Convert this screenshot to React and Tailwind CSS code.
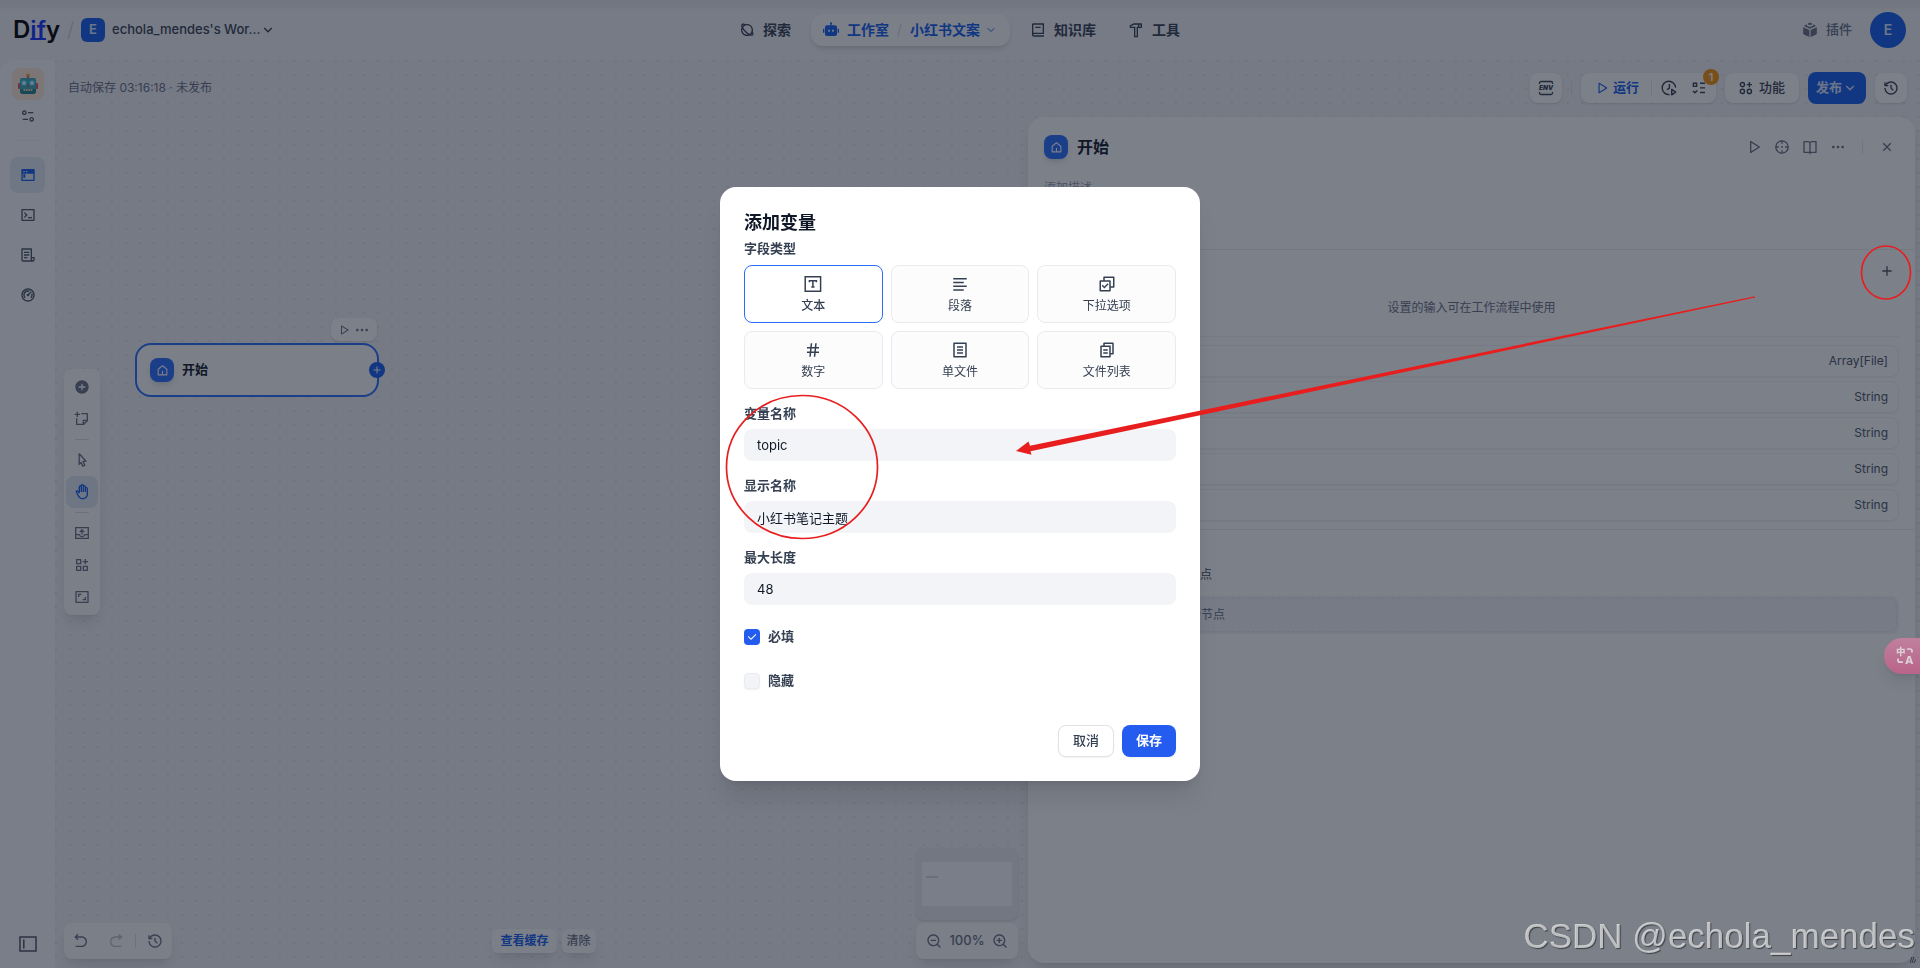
import React from 'react';
import {
  RiAddCircleFill,
  RiAddLine,
  RiAlignLeft,
  RiArrowDownSLine,
  RiArrowGoBackLine,
  RiArrowGoForwardFill,
  RiAspectRatioLine,
  RiBook2Line,
  RiBookOpenLine,
  RiCheckLine,
  RiCheckboxMultipleLine,
  RiCloseLine,
  RiDashboard2Line,
  RiEqualizer2Line,
  RiFileCopy2Line,
  RiFileList3Line,
  RiFileListLine,
  RiFunctionAddLine,
  RiHammerLine,
  RiHand,
  RiHashtag,
  RiHistoryLine,
  RiHome5Line,
  RiMoreFill,
  RiPlanetLine,
  RiPlayLargeLine,
  RiRobot2Fill,
  RiStickyNoteAddLine,
  RiTerminalBoxLine,
  RiTerminalWindowFill,
  RiZoomInLine,
  RiZoomOutLine,
} from 'react-icons/ri';

const EnvIcon = () => (
  <svg viewBox="0 0 16 16" className="size-4" fill="none" stroke="currentColor" strokeWidth="1.3">
    <path d="M1.5 4V3a1.5 1.5 0 0 1 1.5-1.5h10A1.5 1.5 0 0 1 14.5 3v1M1.5 12v1A1.5 1.5 0 0 0 3 14.5h10a1.5 1.5 0 0 0 1.5-1.5v-1" />
    <text x="8" y="10.3" textAnchor="middle" fontSize="6.4" fontWeight="900" fontStyle="italic" fill="currentColor" stroke="none">
      ENV
    </text>
  </svg>
);

const ClockPlayIcon = () => (
  <svg viewBox="0 0 16 16" className="size-4" fill="none" stroke="currentColor" strokeWidth="1.4">
    <path d="M14.6 7.6A6.7 6.7 0 1 0 8.6 14.6" />
    <path d="M8.4 4v4.2L6 9.6" />
    <path d="M10.7 9.4l4 2.7-4 2.7z" strokeLinejoin="round" />
  </svg>
);

const ChecklistIcon = () => (
  <svg viewBox="0 0 14 14" className="size-3.5" fill="none" stroke="currentColor" strokeWidth="1.4">
    <path d="M1.4 2.2h3.2v3.2H1.4zM8 2.3h5M8 6.9h5M8 11.5h5M1 10l1.9 1.8L5.3 9.4" />
  </svg>
);

const FeaturesIcon = () => (
  <svg viewBox="0 0 14 14" className="size-3.5" fill="none" stroke="currentColor" strokeWidth="1.4">
    <circle cx="3.4" cy="3.6" r="2.1" />
    <circle cx="3.4" cy="10.4" r="2.1" />
    <circle cx="10.4" cy="10.4" r="2.1" />
    <path d="M10.4 1v5.2M7.8 3.6H13" />
  </svg>
);

const PluginIcon = () => (
  <svg viewBox="0 0 16 16" className="size-4" fill="currentColor">
    <path d="M1.2 5.2l6.2 2.9v7L1.8 12.4a1 1 0 0 1-.6-.9zM14.8 5.2L8.6 8.1v7l5.6-2.7a1 1 0 0 0 .6-.9z" />
    <path d="M4.9 2.3L1.9 3.9 8 6.8l6.1-2.9-3-1.6v1.4L8 5 4.9 3.7z" />
    <ellipse cx="8" cy="1.9" rx="2.1" ry="1.1" />
  </svg>
);

const TargetIcon = () => (
  <svg viewBox="0 0 16 16" className="size-4" fill="none" stroke="currentColor" strokeWidth="1.3">
    <circle cx="8" cy="8" r="6.2" />
    <path d="M8 1.8v3M8 11.2v3M1.8 8h3M11.2 8h3" />
    <circle cx="8" cy="8" r="0.9" fill="currentColor" stroke="none" />
  </svg>
);

const PointerIcon = () => (
  <svg viewBox="0 0 16 16" className="size-4" fill="none" stroke="currentColor" strokeWidth="1.3" strokeLinejoin="round">
    <path d="M5.2 1.8l6.8 7.4-3 .4 1.8 3.6-2 1-1.8-3.7-1.8 1.9z" />
  </svg>
);

const ExportIcon = () => (
  <svg viewBox="0 0 16 16" className="size-4" fill="none" stroke="currentColor" strokeWidth="1.3">
    <path d="M1.7 2.6h12.6v10.8H1.7zM1.7 9.6h3.6c.4 1.3 1.4 2 2.7 2s2.3-.7 2.7-2h3.6M8 9.6V5M5.8 7L8 4.8 10.2 7" />
  </svg>
);

const SidebarIcon = () => (
  <svg viewBox="0 0 18 16" className="h-4 w-[18px]" fill="none" stroke="currentColor" strokeWidth="1.5">
    <path d="M1 1h16v14H1zM4.8 3.5v9" />
  </svg>
);

const TextFieldIcon = () => (
  <svg viewBox="0 0 18 18" className="size-[18px]" fill="none" stroke="currentColor" strokeWidth="1.5">
    <path d="M1.2 1.8h15.4v14.4H1.2zM5.4 7.2V5.7h7v1.5M8.9 5.7v6.2M7.3 11.9h3.2" />
  </svg>
);

const TranslateIcon = () => (
  <svg viewBox="0 0 18 18" className="size-[18px] overflow-visible" fill="currentColor">
    <text x="0" y="8.4" fontSize="9.5" fontWeight="900">中</text>
    <text x="9" y="16.6" fontSize="11" fontWeight="800">A</text>
    <path d="M11 2h3a2 2 0 0 1 2 2v1.6M2 11.6v1.6a2 2 0 0 0 2 2h3" fill="none" stroke="currentColor" strokeWidth="1.7" />
  </svg>
);

const HomeBadge = () => (
  <span className="flex size-6 shrink-0 items-center justify-center rounded-lg bg-[#296dff] text-white shadow-md">
    <RiHome5Line className="size-[13px]" />
  </span>
);

const RobotFace = () => (
  <svg viewBox="0 0 22 22" className="size-[22px]">
    <circle cx="11" cy="2.4" r="2" fill="#f0a53a" />
    <rect x="10" y="3.4" width="2" height="3" fill="#8d6bb0" />
    <rect x="1" y="10" width="3" height="6" rx="1" fill="#d8576a" />
    <rect x="18" y="10" width="3" height="6" rx="1" fill="#d8576a" />
    <path d="M5 5h12a2 2 0 0 1 2 2v11a3 3 0 0 1-3 3H6a3 3 0 0 1-3-3V7a2 2 0 0 1 2-2z" fill="#3fa9b5" />
    <path d="M3 16h16v2a3 3 0 0 1-3 3H6a3 3 0 0 1-3-3z" fill="#22808f" />
    <circle cx="7" cy="10" r="2.6" fill="#e3fbff" stroke="#2cc3e8" strokeWidth="1.2" />
    <circle cx="15" cy="10" r="2.6" fill="#e3fbff" stroke="#2cc3e8" strokeWidth="1.2" />
    <path d="M11 11l1.5 2.6h-3z" fill="#d8474f" />
    <path d="M6.5 17h9" stroke="#f3d9b8" strokeWidth="2" strokeDasharray="1.6 0.8" />
  </svg>
);

const sideNav = [
  { label: '编排', Icon: RiTerminalWindowFill, active: true },
  { label: '访问 API', Icon: RiTerminalBoxLine },
  { label: '日志', Icon: RiFileList3Line },
  { label: '监测', Icon: RiDashboard2Line },
];

const outputTypes = ['Array[File]', 'String', 'String', 'String', 'String'];

const fieldTypes = [
  { label: '文本', Icon: TextFieldIcon, active: true },
  { label: '段落', Icon: RiAlignLeft },
  { label: '下拉选项', Icon: RiCheckboxMultipleLine },
  { label: '数字', Icon: RiHashtag },
  { label: '单文件', Icon: RiFileListLine },
  { label: '文件列表', Icon: RiFileCopy2Line },
];

const textFields = [
  { id: 'variable', label: '变量名称', value: 'topic' },
  { id: 'label', label: '显示名称', value: '小红书笔记主题' },
  { id: 'max-length', label: '最大长度', value: '48' },
];

const Header = () => (
  <header className="flex h-[60px] shrink-0 items-center bg-linear-to-b from-[#e6e8eb] from-5% to-[#f2f4f7] to-20% text-[#354052]">
    <div className="flex flex-1 items-center pl-[13px]">
      <a href="#" className="text-2xl leading-7 font-semibold text-black">
        D<span className="text-[#1433ff] underline decoration-2 underline-offset-0">if</span>y
      </a>
      <span className="mx-[7px] text-xl font-light text-[#cbd0d9]">/</span>
      <button className="flex items-center text-[13px] font-medium">
        <span className="mr-[7px] flex size-6 items-center justify-center rounded-md bg-[#155eef] font-semibold text-[#dbe6ff]">E</span>
        echola_mendes's Wor...
        <RiArrowDownSLine className="size-4" />
      </button>
    </div>

    <nav className="flex items-center gap-2 text-sm font-semibold">
      <a href="#" className="flex h-8 items-center gap-2 px-3">
        <RiPlanetLine className="size-4" />探索
      </a>
      <div className="flex h-8 items-center rounded-xl bg-[#fcfcfd] px-3 text-[#155eef] shadow-md">
        <a href="#" className="flex items-center gap-2">
          <RiRobot2Fill className="size-4" />工作室
        </a>
        <span className="mx-2 font-light text-[#cbd0d9]">/</span>
        <button className="flex items-center gap-1">
          小红书文案
          <RiArrowDownSLine className="size-3.5 opacity-60" />
        </button>
      </div>
      <a href="#" className="flex h-8 items-center gap-2 px-3">
        <RiBook2Line className="size-4" />知识库
      </a>
      <a href="#" className="flex h-8 items-center gap-2 px-3">
        <RiHammerLine className="size-4" />工具
      </a>
    </nav>

    <div className="flex flex-1 items-center justify-end gap-[18px] pr-[14px]">
      <a href="#" className="flex items-center gap-2 text-[13px] font-medium text-[#676f83]">
        <PluginIcon />插件
      </a>
      <button className="flex size-9 items-center justify-center rounded-full bg-[#155eef] text-sm font-semibold text-[#dbe6ff]">E</button>
    </div>
  </header>
);

const Sidebar = () => (
  <aside className="flex w-[55px] shrink-0 flex-col items-center rounded-tl-2xl bg-[#fafbfc] pt-2 pb-4 text-[#495464]">
    <span className="flex size-8 items-center justify-center rounded-lg bg-[#ffead5]">
      <RobotFace />
    </span>
    <button aria-label="应用设置" className="mt-2">
      <RiEqualizer2Line className="size-4" />
    </button>
    <hr className="mt-4 w-6 border-[#f0f2f4]" />
    <nav className="mt-4 flex flex-1 flex-col gap-1">
      {sideNav.map(({ label, Icon, active }) => (
        <a
          key={label}
          href="#"
          aria-label={label}
          className={`flex h-9 w-[35px] items-center justify-center rounded-lg ${active ? 'bg-[#e3ecf5] text-[#155eef]' : ''}`}
        >
          <Icon className="size-4" />
        </a>
      ))}
    </nav>
    <button aria-label="展开侧栏">
      <SidebarIcon />
    </button>
  </aside>
);

const Toolbar = () => (
  <div className="flex h-[57px] shrink-0 items-center justify-between pr-[13px] pb-px pl-[13px] text-[13px] font-medium text-[#354052]">
    <p className="text-xs font-normal text-[#676f83]">自动保存 03:16:18 · 未发布</p>
    <div className="flex items-center gap-[9px]">
      <button aria-label="环境变量" className="flex h-[30px] w-8 items-center justify-center rounded-lg bg-white shadow-sm">
        <EnvIcon />
      </button>
      <span className="h-3.5 w-px bg-[#dcdfe6]" />
      <div className="relative flex h-[30px] w-[135px] items-center rounded-lg bg-white pl-[14px] shadow-sm">
        <button className="flex items-center gap-1 font-semibold text-[#155eef]">
          <RiPlayLargeLine className="size-3.5" />运行
        </button>
        <span className="mr-[9px] ml-3 h-3.5 w-px bg-[#e4e7ec]" />
        <button aria-label="运行历史">
          <ClockPlayIcon />
        </button>
        <button aria-label="检查清单" className="ml-[15px]">
          <ChecklistIcon />
        </button>
        <span className="absolute -top-1 -right-[3px] flex size-4 items-center justify-center rounded-full bg-[#f79009] text-[11px] font-semibold text-white">1</span>
      </div>
      <button className="flex h-[30px] w-[74px] items-center justify-center gap-1.5 rounded-lg bg-white shadow-sm">
        <FeaturesIcon />功能
      </button>
      <button className="flex h-8 w-[58px] items-center justify-center rounded-lg bg-[#155eef] font-semibold text-[#dbe6ff]">
        发布<RiArrowDownSLine className="size-4" />
      </button>
      <button aria-label="版本历史" className="flex h-[30px] w-8 items-center justify-center rounded-lg bg-white shadow-sm">
        <RiHistoryLine className="size-4" />
      </button>
    </div>
  </div>
);

const ToolButton = ({ label, active, children }) => (
  <button
    aria-label={label}
    className={`flex size-8 items-center justify-center rounded-lg ${active ? 'bg-[#dfe8f2] text-[#155eef]' : ''}`}
  >
    {children}
  </button>
);

const StartNode = () => (
  <div className="absolute top-[226px] left-20 flex h-[54px] w-[244px] items-center gap-2 rounded-2xl border-2 border-[#296dff] bg-[#fcfcfd] px-[13px]">
    <HomeBadge />
    <span className="text-[13px] font-semibold text-[#101828]">开始</span>
    <div className="absolute right-0 bottom-[54px] flex h-[23px] w-[46px] items-center justify-between rounded-lg bg-white px-[7px] text-[#676f83] shadow-sm">
      <RiPlayLargeLine className="size-3" />
      <RiMoreFill className="size-4" />
    </div>
    <button aria-label="添加节点" className="absolute top-[17px] -right-[8px] flex size-4 items-center justify-center rounded-full bg-[#155eef] text-white">
      <RiAddLine className="size-3" />
    </button>
  </div>
);

const CanvasControls = () => (
  <div className="flex min-w-0 flex-1 flex-col justify-between pt-[252px] pr-[10px] pb-[9px] pl-[9px] text-[#676f83]">
    <div className="flex w-9 flex-col items-center rounded-lg bg-[#fcfcfd] py-0.5 shadow-lg">
      <ToolButton label="添加节点"><RiAddCircleFill className="size-4" /></ToolButton>
      <ToolButton label="添加注释"><RiStickyNoteAddLine className="size-4" /></ToolButton>
      <hr className="my-1 w-3.5 border-[#d9dde5]" />
      <ToolButton label="指针模式"><PointerIcon /></ToolButton>
      <ToolButton label="手模式" active><RiHand className="size-4" /></ToolButton>
      <hr className="my-1 w-3.5 border-[#d9dde5]" />
      <ToolButton label="导出图片"><ExportIcon /></ToolButton>
      <ToolButton label="整理节点"><RiFunctionAddLine className="size-4" /></ToolButton>
      <ToolButton label="最大化画布"><RiAspectRatioLine className="size-4" /></ToolButton>
    </div>

    <div className="flex items-end justify-between">
      <div className="flex h-9 w-[108px] items-center justify-between rounded-lg bg-[#fcfcfd] px-[9px] shadow-lg">
        <button aria-label="撤销"><RiArrowGoBackLine className="size-4" /></button>
        <button aria-label="重做" className="ml-2 opacity-40"><RiArrowGoForwardFill className="size-4" /></button>
        <span className="h-3.5 w-px bg-[#dcdfe6]" />
        <button aria-label="变更历史"><RiHistoryLine className="size-4" /></button>
      </div>
      <div className="mb-1.5 flex gap-[5px] text-xs">
        <button className="h-6 rounded-md bg-[#fcfcfd] px-2 font-semibold text-[#155eef] shadow-lg">查看缓存</button>
        <button className="h-6 rounded-md bg-[#fcfcfd] px-[5px] font-medium shadow-lg">清除</button>
      </div>
      <div className="flex w-[102px] flex-col gap-[3px]">
        <div className="flex h-[72px] items-center justify-center rounded-lg bg-[#e9ebf0] shadow-sm">
          <div className="h-11 w-[90px] bg-[#fafbfc] px-1 pt-3.5">
            <div className="h-0.5 w-3 bg-[#d5d9e0]" />
          </div>
        </div>
        <div className="flex h-9 items-center justify-between rounded-lg bg-[#fcfcfd] px-[10px] shadow-lg">
          <button aria-label="缩小"><RiZoomOutLine className="size-4" /></button>
          <span className="text-[13px] font-medium">100%</span>
          <button aria-label="放大"><RiZoomInLine className="size-4" /></button>
        </div>
      </div>
    </div>
  </div>
);

const NodePanel = () => (
  <section className="relative mr-[5px] mb-[5px] flex w-[887px] shrink-0 flex-col rounded-2xl bg-white text-xs text-[#495464] shadow-lg">
    <div className="flex items-center px-4 pt-[18px]">
      <HomeBadge />
      <h2 className="ml-[9px] flex-1 text-base leading-6 font-semibold text-[#101828]">开始</h2>
      <div className="flex items-center gap-3 pr-1 text-[#676f83]">
        <button aria-label="运行此步骤"><RiPlayLargeLine className="size-4" /></button>
        <button aria-label="定位节点"><TargetIcon /></button>
        <button aria-label="帮助文档"><RiBookOpenLine className="size-4" /></button>
        <button aria-label="更多"><RiMoreFill className="size-4" /></button>
        <span className="mx-1 h-3.5 w-px bg-[#e4e7ec]" />
        <button aria-label="关闭"><RiCloseLine className="size-4" /></button>
      </div>
    </div>
    <p className="mt-5 px-4 leading-[18px] text-[#98a2b2]">添加描述</p>
    <div className="mt-[52px] border-y border-[#ebedf1] px-4">
      <div className="flex h-[41px] items-center justify-end pr-1">
        <button aria-label="添加变量"><RiAddLine className="size-4" /></button>
      </div>
      <p className="flex h-[33px] items-center justify-center text-[#676f83]">设置的输入可在工作流程中使用</p>
      <hr className="mt-3 mb-2 border-[#eff1f4]" />
      <ul className="flex flex-col gap-1 pb-2">
        {outputTypes.map((type, idx) => (
          <li key={idx} className="flex h-8 items-center justify-end rounded-lg border border-[#f0f2f5] px-[10px] shadow-xs">
            {type}
          </li>
        ))}
      </ul>
    </div>
    <div className="px-4 pt-9">
      <p className="leading-[18px]">添加此工作流程中的下一个节点</p>
      <div className="mt-3 flex items-center">
        <HomeBadge />
        <span className="h-px w-6 bg-[#d0d5dc]" />
        <button className="flex-1 rounded-lg bg-[#f2f4f7] p-0.5 text-left text-[#676f83]">
          <span className="flex h-[34px] items-center gap-2 rounded-lg border border-dashed border-[#e1e4ea] pl-[22px]">
            <RiAddLine className="size-4" />选择下一个节点
          </span>
        </button>
      </div>
    </div>
    <svg viewBox="0 0 6 6" className="absolute -right-px bottom-0 size-1.5" stroke="#354052" strokeWidth="0.8">
      <path d="M0 6L2 0M2 6L4 0M4 6L6 2" />
    </svg>
  </section>
);

const AddVariableDialog = () => (
  <div className="fixed inset-0 flex items-center justify-center bg-[#101828]/55">
    <form role="dialog" aria-label="添加变量" className="w-[480px] rounded-2xl bg-white p-6 text-[13px] text-[#354052] shadow-xl">
      <h2 className="text-lg leading-6 font-semibold text-[#101828]">添加变量</h2>
      <p className="mt-px mb-[5px] leading-6 font-semibold">字段类型</p>
      <div className="grid grid-cols-3 gap-2">
        {fieldTypes.map(({ label, Icon, active }) => (
          <button
            type="button"
            key={label}
            className={`flex h-[58px] flex-col items-center justify-center gap-1 rounded-lg border pt-0.5 text-xs leading-[18px] ${
              active ? 'border-[#296dff] bg-white font-medium' : 'border-[#e9ebf0] bg-[#fcfcfd]'
            }`}
          >
            <Icon className="size-[18px]" />
            {label}
          </button>
        ))}
      </div>
      {textFields.map((field) => (
        <div key={field.id} className="mt-3">
          <label htmlFor={field.id} className="mb-1 block leading-6 font-semibold">{field.label}</label>
          <input id={field.id} defaultValue={field.value} className="block h-8 w-full rounded-lg bg-[#f2f4f7] px-[13px] text-[#101828] outline-none" />
        </div>
      ))}
      <div className="mt-6 flex flex-col gap-7 font-semibold">
        <label className="flex h-4 items-center gap-2">
          <span className="relative flex size-4">
            <input type="checkbox" defaultChecked className="peer size-4 appearance-none rounded-sm bg-[#f2f4f7] checked:bg-[#255cf0]" />
            <RiCheckLine className="pointer-events-none absolute inset-0.5 size-3 text-white" />
          </span>
          必填
        </label>
        <label className="flex h-4 items-center gap-2">
          <input type="checkbox" className="size-4 appearance-none rounded-sm border border-[#e9ebf0] bg-[#f2f4f7] shadow-xs" />
          隐藏
        </label>
      </div>
      <div className="mt-9 flex justify-end gap-2">
        <button type="button" className="h-8 w-14 rounded-lg border border-[#dfe2e7] bg-white font-medium shadow-xs">取消</button>
        <button type="submit" className="h-8 w-[54px] rounded-lg bg-[#255cf0] font-semibold text-white shadow-xs">保存</button>
      </div>
    </form>
  </div>
);

// red hand-drawn marks, laid over everything else
const Annotations = () => (
  <svg viewBox="0 0 1920 968" className="pointer-events-none fixed inset-0 size-full" fill="none" stroke="#e81e1e" strokeWidth="1.7">
    <ellipse cx="802" cy="467" rx="75.5" ry="71.5" />
    <ellipse cx="1886" cy="272.5" rx="24.5" ry="26.5" />
    <path d="M1755 296.2L1030 445.8 1028.5 441.5 1016 451 1031.5 454.7 1030.5 451.3 1755 297.6z" fill="#e81e1e" stroke="none" />
  </svg>
);

const App = () => {
  return (
    <div className="flex h-screen flex-col overflow-hidden bg-[#f2f4f7] font-[Inter,'Noto_Sans_CJK_SC',sans-serif]">
      <Header />
      <div className="flex min-h-0 flex-1">
        <Sidebar />
        <main className="flex min-w-0 flex-1 flex-col bg-[#f0f2f6] bg-[radial-gradient(circle_at_1px_1px,#dfe2ea_1px,transparent_0)] bg-size-[14px_14px]">
          <Toolbar />
          <div className="relative flex min-h-0 flex-1">
            <StartNode />
            <CanvasControls />
            <NodePanel />
          </div>
        </main>
      </div>
      <AddVariableDialog />
      <button aria-label="翻译" className="fixed top-[638px] right-0 flex h-9 w-9 items-center rounded-l-full bg-linear-to-b from-[#c0809c] to-[#b8648a] pl-3 text-[#dcd0d6] shadow-lg">
        <TranslateIcon />
      </button>
      <Annotations />
      <p className="pointer-events-none fixed right-[5px] bottom-3 font-['Liberation_Sans',sans-serif] text-[35px] leading-10 text-white/65 [text-shadow:1px_1px_1px_rgb(0_0_0/0.5)]">
        CSDN @echola_mendes
      </p>
    </div>
  );
};

export default App;
